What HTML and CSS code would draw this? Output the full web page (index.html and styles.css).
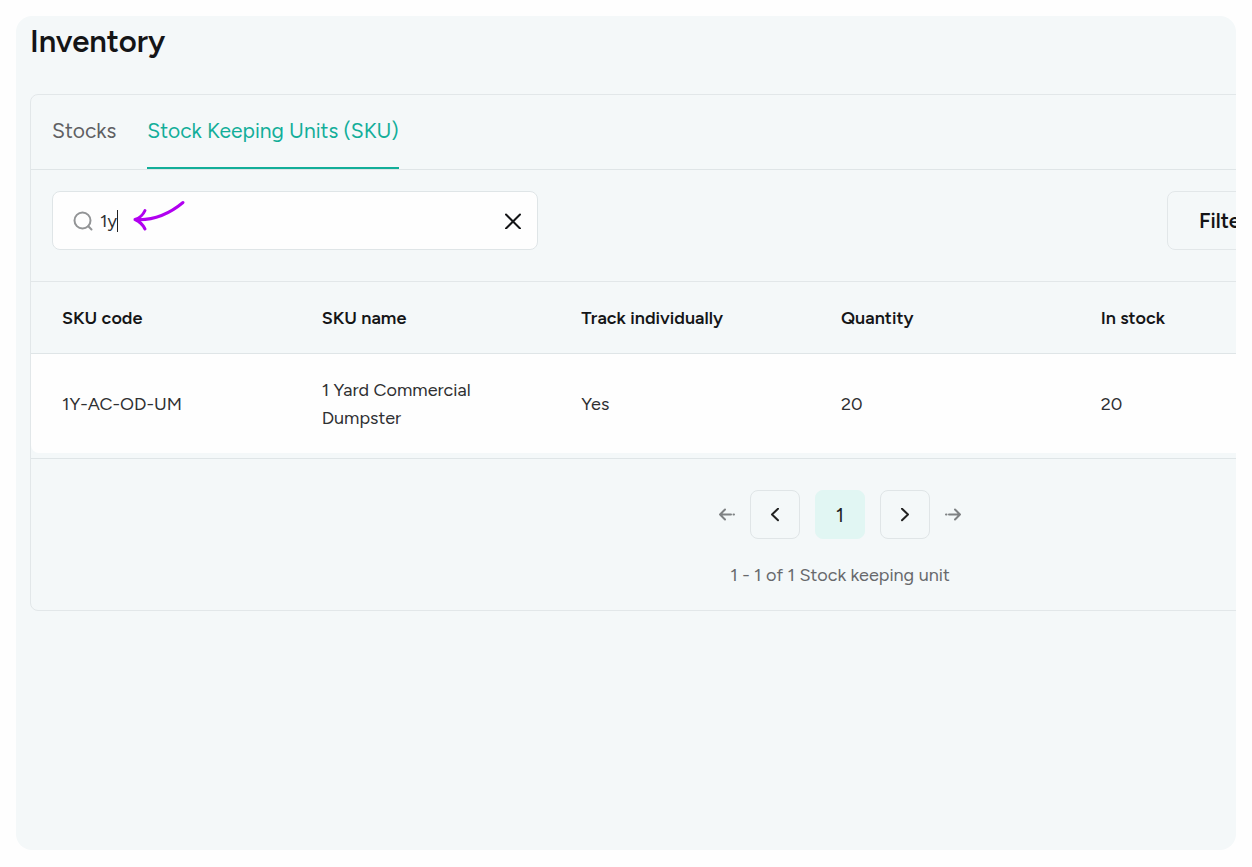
FILE: index.html
```html
<!DOCTYPE html>
<html lang="en">
<head>
    <meta charset="UTF-8">
    <meta name="viewport" content="width=device-width, initial-scale=1.0">
    <title>Inventory</title>
    <link rel="stylesheet" href="styles.css">
</head>
<body>
    <main class="page">
        <h1>Inventory</h1>
        <section class="card">
            <nav class="tabs">
                <a href="#stocks" class="tab">Stocks</a>
                <a href="#sku" class="tab active">Stock Keeping Units (SKU)</a>
            </nav>

            <div class="toolbar">
                <div class="search">
                    <svg class="search-icon" width="20" height="20" viewBox="0 0 20 20"><circle cx="9.500" cy="9.500" r="8"/><path d="M15.3 15.3 18.5 18.5"/></svg>
                    <input type="text" class="search-input" aria-label="Search" value="1y">
                    <span class="caret"></span>
                    <svg class="pointer" width="54" height="34" viewBox="0 0 54 34"><path d="M50 3.500C38 13.500 23 22 2 20.500M12 11.500C10 16 7 19 2 20.500C7 22.500 10 26 12 30"/></svg>
                    <button type="button" class="clear" aria-label="Clear search">
                        <svg width="16" height="16" viewBox="0 0 16 16"><path d="M1 1.500 15 15.500M15 1.500 1 15.500"/></svg>
                    </button>
                </div>
                <button type="button" class="filter">Filters</button>
            </div>

            <table class="sku-table">
                <thead>
                    <tr>
                        <th>SKU code</th>
                        <th>SKU name</th>
                        <th>Track individually</th>
                        <th>Quantity</th>
                        <th>In stock</th>
                        <th></th>
                    </tr>
                </thead>
                <tbody>
                    <tr>
                        <td>1Y-AC-OD-UM</td>
                        <td>1 Yard Commercial Dumpster</td>
                        <td>Yes</td>
                        <td>20</td>
                        <td>20</td>
                        <td></td>
                    </tr>
                </tbody>
            </table>

            <footer class="footer">
                <div class="pagination">
                    <button type="button" class="page-end" aria-label="First page">
                        <svg width="16" height="14" viewBox="0 0 16 14"><path d="M6 1.500 1 6.500 6 11.500M1 6.500H12M14.500 6.500H15"/></svg>
                    </button>
                    <button type="button" class="page-btn" aria-label="Previous page">
                        <svg width="10" height="14" viewBox="0 0 10 14"><path d="M8 .8 2 6.500 8 12.200"/></svg>
                    </button>
                    <button type="button" class="page-btn current">1</button>
                    <button type="button" class="page-btn" aria-label="Next page">
                        <svg width="10" height="14" viewBox="0 0 10 14"><path d="M2 .8 8 6.500 2 12.200"/></svg>
                    </button>
                    <button type="button" class="page-end" aria-label="Last page">
                        <svg width="16" height="14" viewBox="0 0 16 14"><path d="M10 1.500 15 6.500 10 11.500M15 6.500H4M1.500 6.500H1"/></svg>
                    </button>
                </div>
                <p class="summary">1 - 1 of 1 Stock keeping unit</p>
            </footer>
        </section>
    </main>
</body>
</html>
```

FILE: styles.css
```css
* { box-sizing: border-box; }
body {
    margin: 0;
    padding: 16px 16px 17px;
    min-height: 100vh;
    display: flex;
    background-color: #fefefe;
    font-family: Figtree, Inter, sans-serif;
    font-size: 18px;
    color: #2f3032;
}
button, input { font-family: inherit; font-size: inherit; color: inherit; }
button { padding: 0; border: none; background: none; cursor: pointer; }
svg { display: block; fill: none; stroke: currentColor; stroke-linecap: round; stroke-linejoin: round; stroke-width: 2; }

.page {
    flex: 1;
    min-width: 0;
    padding: 8px 0 0 14px;
    overflow: hidden;
    border-radius: 16px;
    background-color: #f4f8f9;
}
h1 { margin: 0 0 34px; font-size: 31px; line-height: 36px; font-weight: 600; color: #141517; }

/* the card is wider than the page and gets cut off on the right */
.card { margin-right: -414px; border: 1px solid #e2e7e9; border-radius: 8px; }

.tabs { display: flex; gap: 31px; padding: 0 21px; border-bottom: 1px solid #dfe5e7; }
.tab { height: 74px; line-height: 72px; font-size: 21px; color: #5f6063; text-decoration: none; }
.tab.active { color: #12ae99; border-bottom: 2px solid #12ae99; }

.toolbar { display: grid; grid-template-columns: 486px 461px; justify-content: space-between; padding: 21px 21px 31px; }
.search {
    position: relative;
    display: flex;
    align-items: center;
    height: 59px;
    padding: 0 16px 0 20px;
    border: 1px solid #dfe5e7;
    border-radius: 8px;
    background: #fefefe;
}
.search-icon { color: #929496; }
.search-input { flex: 1; min-width: 0; padding: 0 0 0 7px; border: none; outline: none; background: none; }
.caret { position: absolute; left: 64px; top: 18px; width: 1px; height: 22px; background: #222; }
.pointer { position: absolute; left: 80px; top: 7px; color: #b100f0; stroke-width: 3; }
.clear { color: #141517; }
.filter {
    padding: 0 31px;
    border: 1px solid #e2e7e9;
    border-radius: 8px;
    font-size: 21px;
    font-weight: 600;
    text-align: left;
    color: #141517;
}

.sku-table { width: 100%; table-layout: fixed; border-collapse: separate; border-spacing: 0; padding-right: 60px; border-bottom: 1px solid #dfe5e7; border-top: 1px solid #e2e7e9; padding-bottom: 5px; }
.sku-table th, .sku-table td { padding: 0 60px 0 31px; text-align: left; line-height: 28px; }
.sku-table th { height: 72px; padding-right: 0; border-bottom: 1px solid #dfe5e7; font-weight: 600; color: #141517; }
.sku-table td { height: 99px; background: #fefefe; }
.sku-table td:first-child { border-bottom-left-radius: 8px; }

.footer { display: flex; flex-direction: column; align-items: center; padding: 31px 0 21px; }
.pagination { display: flex; align-items: center; gap: 15px; }
.page-btn { display: grid; place-items: center; width: 50px; height: 49px; border: 1px solid #e0e5e7; border-radius: 8px; color: #222; }
.page-btn.current { border-color: #e1f6f3; background: #e1f6f3; font-size: 20px; }
.page-end { color: #7f8284; }
.summary { margin: 22px 0 0; line-height: 28px; color: #67696c; }
```
